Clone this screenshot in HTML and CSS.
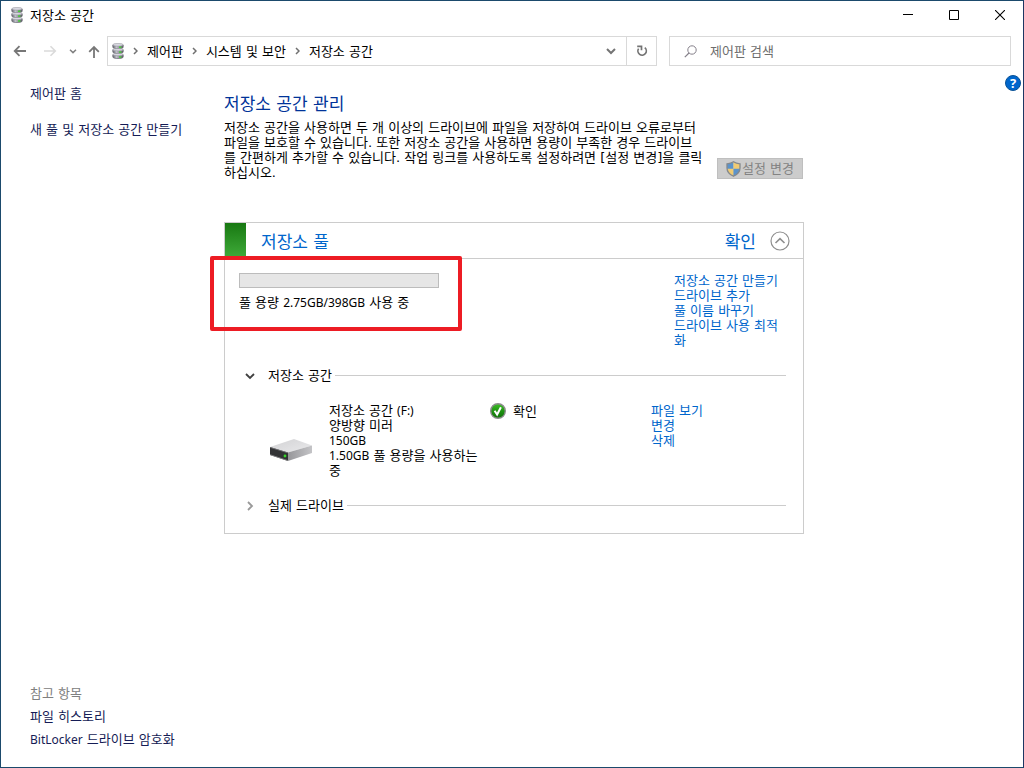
FILE: index.html
```html
<!DOCTYPE html>
<html lang="ko">
<head>
<meta charset="utf-8">
<title>저장소 공간</title>
<link rel="stylesheet" href="styles.css">
</head>
<body>
<svg class="defs" aria-hidden="true">
  <defs>
    <linearGradient id="metal" x1="0" x2="1" y1="0" y2="0">
      <stop offset="0" stop-color="#66666e"/><stop offset=".35" stop-color="#c4c4cc"/><stop offset="1" stop-color="#5c5c66"/>
    </linearGradient>
    <linearGradient id="ball" x1="0" x2="0" y1="0" y2="1">
      <stop offset="0" stop-color="#3fc028"/><stop offset=".5" stop-color="#1f9412"/><stop offset="1" stop-color="#10700a"/>
    </linearGradient>
    <linearGradient id="lid" x1="0" x2="1" y1="0" y2="1">
      <stop offset="0" stop-color="#d2d2d4"/><stop offset="1" stop-color="#e9e9eb"/>
    </linearGradient>
    <linearGradient id="side" x1="0" x2="1" y1="0" y2="0">
      <stop offset="0" stop-color="#97979a"/><stop offset="1" stop-color="#c4c4c7"/>
    </linearGradient>
    <symbol id="stack" viewBox="0 0 12 16">
      <g fill="url(#metal)" stroke="#6a6a74" stroke-width=".7">
        <path d="M.8 11.800v2.200c0 2 10.400 2 10.400 0v-2.200z"/>
        <path d="M.8 6.800v2.200c0 2 10.400 2 10.400 0v-2.200z"/>
        <path d="M.8 2v2.200c0 2 10.400 2 10.400 0V2z"/>
      </g>
      <g fill="#d8d8e0" stroke="#8a8a94" stroke-width=".5">
        <ellipse cx="6" cy="11.600" rx="5.200" ry="1.200"/>
        <ellipse cx="6" cy="6.700" rx="5.200" ry="1.200"/>
        <ellipse cx="6" cy="1.800" rx="5.200" ry="1.400"/>
      </g>
      <g fill="#38e020"><rect x="7" y="3.600" width="2.400" height="1.200"/><rect x="7" y="8.500" width="2.400" height="1.200"/><rect x="7" y="13.400" width="2.400" height="1.200"/></g>
    </symbol>
  </defs>
</svg>

<div class="window">
  <header class="titlebar">
    <svg class="stack" width="12" height="16" aria-hidden="true"><use href="#stack"/></svg>
    <span class="caption">저장소 공간</span>
    <button class="control" aria-label="최소화"><svg width="10" height="10"><path d="M0 4.500h10" stroke="#000"/></svg></button>
    <button class="control" aria-label="최대화"><svg width="10" height="10"><path d="M.5.5h9v9h-9z" fill="none" stroke="#000"/></svg></button>
    <button class="control" aria-label="닫기"><svg width="10" height="10"><path d="M0 0l10 10M10 0L0 10" stroke="#000" stroke-width="1.100"/></svg></button>
  </header>

  <nav class="toolbar" aria-label="탐색">
    <button class="nav" aria-label="뒤로"><svg width="14" height="12"><path d="M13 6H2M6.500 1.200L1.700 6l4.800 4.800" fill="none" stroke="#777" stroke-width="1.800"/></svg></button>
    <button class="nav" aria-label="앞으로" disabled><svg width="14" height="12"><path d="M1 6h11M7.500 1.200L12.300 6l-4.800 4.800" fill="none" stroke="#dadada" stroke-width="1.600"/></svg></button>
    <button class="nav nav-small" aria-label="최근 위치"><svg width="8" height="5"><path d="M1 .8l3 2.800L7 .8" fill="none" stroke="#808080" stroke-width="1.500"/></svg></button>
    <button class="nav nav-up" aria-label="위로"><svg width="12" height="13"><path d="M6 13V2M1.200 6.800L6 2l4.800 4.800" fill="none" stroke="#777" stroke-width="1.800"/></svg></button>
    <div class="address">
      <svg class="stack" width="12" height="16" aria-hidden="true"><use href="#stack"/></svg>
      <ol class="crumbs">
        <li><svg width="5" height="8"><path d="M1 1l3 3-3 3" fill="none" stroke="#707070" stroke-width="1.500"/></svg><a href="#">제어판</a></li>
        <li><svg width="5" height="8"><path d="M1 1l3 3-3 3" fill="none" stroke="#707070" stroke-width="1.500"/></svg><a href="#">시스템 및 보안</a></li>
        <li><svg width="5" height="8"><path d="M1 1l3 3-3 3" fill="none" stroke="#707070" stroke-width="1.500"/></svg><a href="#">저장소 공간</a></li>
      </ol>
      <button class="drop" aria-label="이전 위치"><svg width="10" height="7"><path d="M1 1l4 4 4-4" fill="none" stroke="#747474" stroke-width="2"/></svg></button>
      <button class="refresh" aria-label="새로 고침"><svg width="12" height="12"><path d="M8.800 2.700A4.200 4.200 0 1 1 2.600 3.600M1.200 1.300h4.300v4" fill="none" stroke="#747474" stroke-width="1.700"/></svg></button>
    </div>
    <label class="search">
      <svg width="13" height="13" aria-hidden="true"><circle cx="8" cy="5" r="4.200" fill="none" stroke="#85808a"/><path d="M5 8L.8 12.200" stroke="#85808a" stroke-width="1.200"/></svg>
      <input type="search" placeholder="제어판 검색" aria-label="제어판 검색">
    </label>
  </nav>

  <div class="content">
    <aside class="sidebar">
      <a href="#">제어판 홈</a>
      <a class="task" href="#">새 풀 및 저장소 공간 만들기</a>
      <div class="related">
        <span class="muted">참고 항목</span>
        <a href="#">파일 히스토리</a>
        <a href="#"><span class="latin">BitLocker</span> 드라이브 암호화</a>
      </div>
    </aside>

    <main class="main">
      <h1>저장소 공간 관리</h1>
      <div class="intro">
        <p>저장소 공간을 사용하면 두 개 이상의 드라이브에 파일을 저장하여 드라이브 오류로부터<br>파일을 보호할 수 있습니다. 또한 저장소 공간을 사용하면 용량이 부족한 경우 드라이브<br>를 간편하게 추가할 수 있습니다. 작업 링크를 사용하도록 설정하려면 [설정 변경]을 클릭<br>하십시오.</p>
        <button class="change" disabled>
          <svg width="15" height="16" viewBox="0 0 15 16" aria-hidden="true">
            <path d="M7.500.8C5.500 2.200 3.500 2.700 1 2.800V7c0 4 2.500 6.500 6.500 8.200z" fill="#5b93cb"/>
            <path d="M7.500.8c2 1.400 4 1.900 6.500 2V7c0 4-2.500 6.500-6.500 8.200z" fill="#f0cb73"/>
            <path d="M1 7.800h6.500v7.400C3.500 13.500 1.200 11.500 1 7.800z" fill="#f0cb73"/>
            <path d="M14 7.800H7.500v7.400c4-1.700 6.300-3.700 6.500-7.400z" fill="#5b93cb"/>
            <path d="M7.500.8C5.500 2.200 3.500 2.700 1 2.800V7c0 4 2.500 6.500 6.500 8.200C11.500 13.500 14 11 14 7V2.800c-2.500-.1-4.500-.6-6.500-2z" fill="none" stroke="#85898d" stroke-width="1.300"/>
          </svg>설정 변경</button>
      </div>

      <section class="pool">
        <header class="pool-head">
          <span class="flag"></span>
          <h2>저장소 풀</h2>
          <span class="state">확인</span>
          <button class="collapse" aria-label="접기"><svg width="20" height="20"><circle cx="10" cy="10" r="9" fill="none" stroke="#8e8e8e" stroke-width="1.200"/><path d="M5.500 12L10 7.700l4.500 4.300" fill="none" stroke="#8e8e8e" stroke-width="1.600"/></svg></button>
        </header>
        <div class="pool-body">
          <div class="summary">
            <div class="usage">
              <progress id="capacity" max="398" value="2.75"></progress>
              <label for="capacity">풀 용량 <span class="latin">2.75GB/398GB</span> 사용 중</label>
              <span class="highlight"></span>
            </div>
            <div class="links pool-links">
              <a href="#">저장소 공간 만들기</a>
              <a href="#">드라이브 추가</a>
              <a href="#">풀 이름 바꾸기</a>
              <a href="#">드라이브 사용 최적화</a>
            </div>
          </div>

          <button class="group" aria-expanded="true"><svg width="12" height="12"><path d="M2 4l4 4 4-4" fill="none" stroke="#404040" stroke-width="1.800"/></svg><span>저장소 공간</span></button>
          <div class="space">
            <svg class="drive" width="44" height="24" viewBox="0 0 44 24" aria-hidden="true">
              <path d="M1 9L25 1l18 6.500L19 14.500z" fill="url(#lid)"/>
              <path d="M19 14.500L43 7.500V15L19 23z" fill="url(#side)"/>
              <path d="M1 9l18 5.500V23L1 17z" fill="#333436"/>
              <path d="M1 9l18 5.500v.8L1 9.800z" fill="#77787a"/>
              <path d="M1 16.300l18 5.900v.8L1 17z" fill="#8b8b8d"/>
              <circle cx="16" cy="18" r="1.400" fill="#37d62a"/>
            </svg>
            <p class="details">저장소 공간 <span class="latin">(F:)</span><br>양방향 미러<br><span class="latin">150GB</span><br><span class="latin">1.50GB</span> 풀 용량을 사용하는<br>중</p>
            <span class="status">
              <svg width="16" height="16" viewBox="0 0 16 16" aria-hidden="true"><circle cx="8" cy="8" r="7.300" fill="url(#ball)" stroke="#8b8b8b" stroke-width="1.400"/><path d="M4.600 7.800l2.500 3.700 3.800-7.300" fill="none" stroke="#fff" stroke-width="2"/></svg>확인</span>
            <div class="links">
              <a href="#">파일 보기</a>
              <a href="#">변경</a>
              <a href="#">삭제</a>
            </div>
          </div>
          <button class="group" aria-expanded="false"><svg width="12" height="12"><path d="M4 2l4 4-4 4" fill="none" stroke="#999" stroke-width="1.800"/></svg><span>실제 드라이브</span></button>
        </div>
      </section>
    </main>

    <button class="help" aria-label="도움말">?</button>
  </div>
</div>
</body>
</html>
```
FILE: styles.css
```css
* { box-sizing: border-box; }

body {
  margin: 0;
  font: 13px/15px "DejaVu Sans", "Noto Sans CJK KR", sans-serif;
  color: #000;
  background: #fff;
}

h1, h2, p, ol { margin: 0; padding: 0; }
a { color: inherit; text-decoration: none; }
svg { display: block; flex: none; }

button {
  margin: 0;
  padding: 0;
  border: 0;
  background: none;
  font: inherit;
  color: inherit;
  display: flex;
  align-items: center;
  justify-content: center;
}

.defs { position: absolute; width: 0; height: 0; }
.latin { font: 12px/15px "Noto Sans", sans-serif; }

.window {
  display: flex;
  flex-direction: column;
  min-height: 100vh;
  border: 1px solid #1b4a6c;
  border-right-color: #1d3763;
}

.titlebar {
  display: flex;
  align-items: center;
  height: 28px;
  padding-left: 10px;
}
.caption { flex: 1; margin-left: 7px; }
.control { width: 46px; height: 28px; }

.toolbar {
  display: flex;
  align-items: center;
  margin-top: 7px;
  padding: 0 12px 0 4px;
}
.nav { width: 30px; height: 30px; }
.nav-small { width: 16px; }
.nav-up { width: 26px; }
.address {
  display: flex;
  align-items: stretch;
  flex: 1 1 550px;
  height: 30px;
  border: 1px solid #d9d9d9;
}
.address .stack { align-self: center; margin-left: 4px; }
.crumbs {
  display: flex;
  flex: 1;
  gap: 9px;
  margin-left: 9px;
  list-style: none;
}
.crumbs li { display: flex; align-items: center; gap: 9px; }
.drop { width: 30px; }
.refresh { width: 30px; border-left: 1px solid #d9d9d9; }
.search {
  display: flex;
  align-items: center;
  flex: 1 1 342px;
  gap: 13px;
  height: 30px;
  margin-left: 12px;
  padding: 0 14px;
  border: 1px solid #d9d9d9;
}
.search input {
  flex: 1;
  min-width: 0;
  padding: 0;
  border: 0;
  outline: 0;
  background: none;
  font: inherit;
}
.search input::placeholder { color: #6d6d6d; opacity: 1; }

.content { display: flex; flex: 1; }
.sidebar {
  display: flex;
  flex-direction: column;
  flex: none;
  width: 223px;
  padding: 20px 20px 20px 29px;
  color: #151c55;
}
.task { margin-top: 21px; }
.related {
  display: flex;
  flex-direction: column;
  gap: 8px;
  margin-top: auto;
}
.muted { color: #808080; }

.main { flex: 0 1 580px; padding-top: 28px; }
h1 {
  font-size: 17px;
  line-height: 20px;
  font-weight: 400;
  color: #003399;
}
.intro {
  display: flex;
  align-items: flex-end;
  justify-content: space-between;
  margin-top: 6px;
  padding-right: 1px;
}
.intro p { white-space: nowrap; }
.change {
  width: 86px;
  height: 21px;
  gap: 1px;
  margin-bottom: 1px;
  border: 1px solid #bfbfbf;
  background: #ccc;
  color: #838383;
}

.pool { margin-top: 42px; border: 1px solid #ccc; }
.pool-head {
  display: flex;
  align-items: center;
  height: 36px;
  padding-right: 13px;
  border-bottom: 1px solid #ccc;
  color: #0066cc;
  font-size: 17px;
  line-height: 20px;
}
.flag {
  align-self: stretch;
  width: 21px;
  background: linear-gradient(#187812, #40ac3a);
}
h2 { flex: 1; margin-left: 15px; font: inherit; }
.pool-head h2, .state { padding-top: 2px; }
.collapse { margin-left: 14px; }

.pool-body { padding: 14px 17px 20px 14px; }
.summary { display: flex; justify-content: space-between; }
.usage { position: relative; width: 200px; align-self: flex-start; }
progress {
  display: block;
  width: 100%;
  height: 15px;
  margin-bottom: 7px;
  border: 1px solid #bcbcbc;
  background: #e6e6e6;
  appearance: none;
}
progress::-webkit-progress-bar { background: #e6e6e6; }
progress::-webkit-progress-value { background: #e6e6e6; }
.usage label { display: block; }
.highlight {
  position: absolute;
  inset: -17px -23px -21px -29px;
  border: 4px solid #ed1c24;
  border-radius: 2px;
  pointer-events: none;
}
.links { display: flex; flex-direction: column; color: #0066cc; }
.pool-links { width: 112px; }

.group {
  width: 100%;
  margin-top: 20px;
  padding-left: 5px;
}
.group svg { margin-right: 12px; }
.group::after {
  content: "";
  flex: 1;
  height: 1px;
  margin-left: 3px;
  background: #ccc;
}
.space {
  display: grid;
  grid-template-columns: 60px 161px 161px 1fr;
  margin-top: 20px;
  padding-left: 30px;
}
.drive { margin-top: 35px; }
.details { white-space: nowrap; }
.status { display: flex; align-items: center; align-self: start; gap: 7px; }

.help {
  width: 16px;
  height: 16px;
  margin: 9px 2px 0 auto;
  border: 1px solid #0a5296;
  border-radius: 50%;
  background: #0066cc;
  color: #fff;
  font-family: "Noto Sans", sans-serif;
  font-weight: 700;
}
```
